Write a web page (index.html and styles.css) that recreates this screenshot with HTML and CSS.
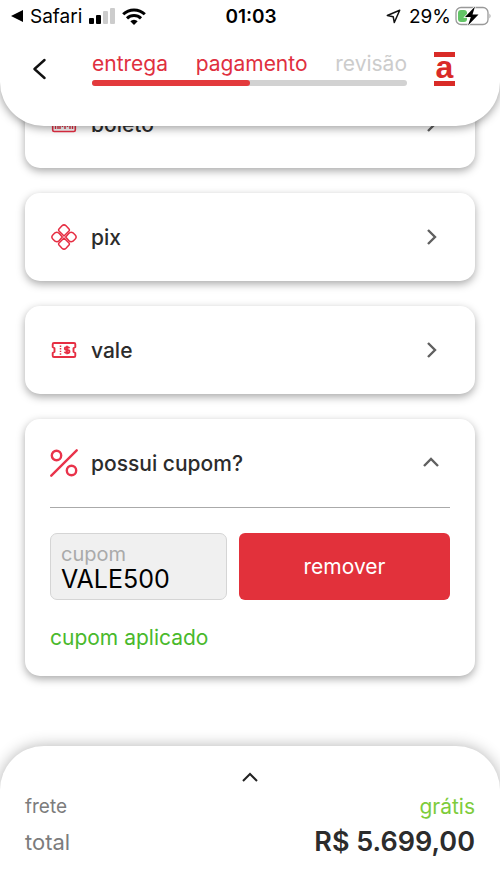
FILE: index.html
```html
<!DOCTYPE html>
<html lang="pt-BR">
<head>
<meta charset="utf-8">
<meta name="viewport" content="width=device-width, initial-scale=1">
<title>pagamento</title>
<link rel="stylesheet" href="styles.css">
</head>
<body>
<header class="top">
  <div class="status">
    <div class="status-left">
      <svg width="12" height="12" viewBox="0 0 12 12" aria-hidden="true"><path d="M0 6 12 0v12z"/></svg>
      <span class="status-app">Safari</span>
      <svg class="signal" width="26" height="17" viewBox="0 0 26 17" aria-hidden="true"><rect y="10" width="5" height="6" rx="1"/><rect x="7" y="7" width="5" height="9" rx="1"/><rect class="off" x="14" y="3" width="5" height="13" rx="1"/><rect class="off" x="21" y="0" width="5" height="16" rx="1"/></svg>
      <svg width="24" height="17" viewBox="0 0 24 17" aria-hidden="true"><g fill="none" stroke="#000" stroke-width="3"><path d="M1.2 6.3a15.4 15.4 0 0 1 21.6 0"/><path d="M5 10.4a10 10 0 0 1 14 0"/></g><path d="M12 17 8.3 13.2a5.3 5.3 0 0 1 7.4 0z"/></svg>
    </div>
    <span class="clock">01:03</span>
    <div class="status-right">
      <svg width="15" height="15" viewBox="0 0 15 15" aria-hidden="true"><path d="M13.700 1.300 1.300 6.500 7.200 7.700 8.300 13.500z" fill="none" stroke="#111" stroke-width="1.500" stroke-linejoin="round"/></svg>
      <span class="percent">29%</span>
      <svg width="36" height="20" viewBox="0 0 36 20" aria-hidden="true"><rect x="1" y="1.500" width="32" height="17" rx="5" fill="#fff" stroke="#999" stroke-width="1.300"/><path d="M34.500 7.500q2 2.500 0 5z" fill="#999"/><rect x="3" y="4" width="9" height="12" rx="3" fill="#62c466"/><path d="M20 .5 10 11h5.800L13 19.500 23.500 8.500h-6z" stroke="#fff" stroke-width="1.500" paint-order="stroke"/></svg>
    </div>
  </div>
  <nav class="nav" aria-label="etapas">
    <button class="back" type="button" aria-label="voltar"><svg width="14" height="22" viewBox="0 0 14 22"><path d="M11.500 2 1.500 11l10 9" fill="none" stroke="#111" stroke-width="2.400" stroke-linecap="round" stroke-linejoin="round"/></svg></button>
    <div class="steps">
      <div class="step-names">
        <a href="#entrega">entrega</a>
        <a href="#pagamento">pagamento</a>
        <span class="pending">revisão</span>
      </div>
      <div class="track"><div class="track-fill"></div></div>
    </div>
    <div class="logo">a</div>
  </nav>
</header>

<main class="options">
  <button class="card row" type="button">
    <svg class="icon" width="28" height="28" viewBox="0 0 28 28" aria-hidden="true"><g fill="none" stroke="#e62e43"><rect x="2.700" y="6" width="22.600" height="15.500" rx="1.500" stroke-width="1.600"/><path d="M5.500 9v10M8 9v10M10 9v10M12.500 9v8M15 9v10M17.500 9v8M20 9v10M22.500 9v10" stroke-width="1.400"/></g></svg>
    <span>boleto</span>
    <svg class="chevron" width="18" height="18" viewBox="0 0 18 18" aria-hidden="true"><path d="m6 2 7 7-7 7"/></svg>
  </button>
  <button class="card row" type="button">
    <svg class="icon" width="28" height="28" viewBox="0 0 28 28" aria-hidden="true"><g fill="none" stroke="#e62e43" stroke-width="1.500" stroke-linejoin="round"><path d="M14 13 9 8Q8.200 7 9 6L12 2.800Q14 .9 16 2.800L19 6Q19.800 7 19 8z"/><path d="M14 15 9 20Q8.200 21 9 22L12 25.200Q14 27.100 16 25.200L19 22Q19.800 21 19 20z"/><path d="M12.300 14 9.300 10.500Q7.300 8.300 5 9.800L2.800 12Q.9 14 2.800 16L5 18.200Q7.300 19.700 9.300 17.500z"/><path d="M15.700 14 18.700 10.500Q20.700 8.300 23 9.800L25.200 12Q27.100 14 25.200 16L23 18.200Q20.700 19.700 18.700 17.500z"/></g></svg>
    <span>pix</span>
    <svg class="chevron" width="18" height="18" viewBox="0 0 18 18" aria-hidden="true"><path d="m6 2 7 7-7 7"/></svg>
  </button>
  <button class="card row" type="button">
    <svg class="icon" width="28" height="28" viewBox="0 0 28 28" aria-hidden="true"><g fill="none" stroke="#e62e43"><path d="M4 7h20q1.300 0 1.300 1.300V11l-1.800 1.200v3.600l1.800 1.200v2.700Q25.300 21 24 21H4q-1.300 0-1.300-1.300V17l1.800-1.200v-3.600L2.700 11V8.300Q2.700 7 4 7z" stroke-width="1.900" stroke-linejoin="round"/><path d="M10.500 9.500v9.500" stroke-width="1.500" stroke-dasharray="1.400 1.200"/><path d="M19.500 12.200q-.7-1-2.500-1-2.200 0-2.200 1.400t2.300 1.400 2.400 1.500-2.400 1.500q-1.900 0-2.600-1.200M17 9.700v8.600" stroke-width="1.800"/></g></svg>
    <span>vale</span>
    <svg class="chevron" width="18" height="18" viewBox="0 0 18 18" aria-hidden="true"><path d="m6 2 7 7-7 7"/></svg>
  </button>
  <section class="card">
    <button class="row" type="button" aria-expanded="true">
      <svg class="icon" width="28" height="28" viewBox="0 0 28 28" aria-hidden="true"><g fill="none" stroke="#e9334b" stroke-width="2.400" stroke-linecap="round"><path d="M1.300 26.700 26.700 1.300"/><circle cx="6.500" cy="6.500" r="4.700"/><circle cx="21.500" cy="21.500" r="4.700"/></g></svg>
      <span>possui cupom?</span>
      <svg class="chevron" width="18" height="18" viewBox="0 0 18 18" aria-hidden="true"><path d="m2 12 7-7 7 7"/></svg>
    </button>
    <div class="coupon">
      <form class="coupon-form">
        <div class="field">
          <label for="cupom">cupom</label>
          <input id="cupom" type="text" value="VALE500" readonly>
        </div>
        <button class="remove" type="button">remover</button>
      </form>
      <p class="applied">cupom aplicado</p>
    </div>
  </section>
</main>

<footer class="summary">
  <button class="expand" type="button" aria-label="ver resumo"><svg width="18" height="12" viewBox="0 0 18 12"><path d="m2 10 7-7 7 7" fill="none" stroke="#222" stroke-width="2"/></svg></button>
  <dl class="totals">
    <div class="line"><dt>frete</dt><dd class="free">grátis</dd></div>
    <div class="line total"><dt>total</dt><dd>R$ 5.699,00</dd></div>
  </dl>
</footer>
</body>
</html>
```

FILE: styles.css
```css
* {
  box-sizing: border-box;
}

body {
  margin: 0;
  min-height: 100vh;
  display: flex;
  flex-direction: column;
  background: #fff;
  color: #2c2c2c;
  font-family: Inter, "Liberation Sans", sans-serif;
  font-size: 21px;
}

button {
  padding: 0;
  border: 0;
  background: none;
  color: inherit;
  font: inherit;
}

svg {
  display: block;
  flex: none;
}

.top {
  position: sticky;
  top: 0;
  z-index: 1;
  padding-bottom: 40px;
  border-radius: 0 0 44px 44px;
  background: #fff;
  box-shadow: 0 2px 10px rgba(0, 0, 0, 0.4);
}

.status {
  display: grid;
  grid-template-columns: 1fr auto 1fr;
  align-items: center;
  height: 32px;
  padding: 0 9px 0 11px;
  color: #000;
  font-size: 19px;
}

.status-left,
.status-right {
  display: flex;
  align-items: center;
}

.status-left {
  gap: 7px;
}

.status-right {
  justify-content: flex-end;
  gap: 4px;
}

.percent {
  margin-left: 4px;
}

.signal .off {
  fill: #ccc;
}

.clock {
  font-weight: 600;
}

.nav {
  display: flex;
  align-items: center;
  height: 54px;
  padding: 20px 45px 0 33px;
}

.back {
  width: 59px;
}

.steps {
  flex: 1;
}

.step-names {
  display: flex;
  justify-content: space-between;
  line-height: 24px;
}

.step-names a {
  color: #e0303f;
  text-decoration: none;
}

.step-names .pending {
  color: #ccc;
}

.track {
  height: 6px;
  margin-top: 4px;
  border-radius: 3px;
  background: #d2d2d2;
}

.track-fill {
  width: 50%;
  height: 6px;
  border-radius: 3px;
  background: #e33a3c;
}

.logo {
  width: 21px;
  height: 34px;
  margin-left: 27px;
  border-top: 5px solid #d92b27;
  border-bottom: 5px solid #d92b27;
  color: #d92b27;
  font-family: "Liberation Sans", sans-serif;
  font-size: 32px;
  font-weight: 700;
  line-height: 21px;
  text-align: center;
}

.options {
  flex: 1;
  display: flex;
  flex-direction: column;
  gap: 25px;
  margin-top: -46px;
  padding: 0 25px 69px;
}

.card {
  border-radius: 15px;
  background: #fff;
  box-shadow: 0 3px 8px rgba(0, 0, 0, 0.34);
}

.row {
  display: flex;
  align-items: center;
  gap: 13px;
  width: 100%;
  height: 88px;
  padding: 0 35px 0 25px;
  font-weight: 500;
}

.chevron {
  margin-left: auto;
  fill: none;
  stroke: #606060;
  stroke-width: 2.4;
}

.coupon {
  margin: 0 25px;
  padding: 25px 0;
  border-top: 1px solid #aaa;
}

.coupon-form {
  display: grid;
  grid-template-columns: 177fr 211fr;
  gap: 12px;
}

.field {
  display: flex;
  flex-direction: column;
  height: 67px;
  padding: 8px 10px;
  border: 1px solid #d5d5d5;
  border-radius: 7px;
  background: #f0f0f0;
}

.field label {
  color: #aaa;
  font-size: 20px;
  line-height: 24px;
}

.field input {
  width: 100%;
  padding: 0;
  border: 0;
  outline: 0;
  background: none;
  color: #000;
  font-family: inherit;
  font-size: 25px;
  line-height: 26px;
}

.remove {
  border-radius: 6px;
  background: #e2313b;
  color: #fff;
}

.applied {
  margin: 25px 0 0;
  color: #49b92c;
  line-height: 26px;
}

.summary {
  position: sticky;
  bottom: 0;
  padding: 25px 25px 29px;
  border-radius: 44px 44px 0 0;
  background: #fff;
  box-shadow: 0 0 15px rgba(0, 0, 0, 0.3);
}

.expand {
  display: block;
  margin: 0 auto 6px;
}

.totals {
  margin: 0;
}

.line {
  display: flex;
  align-items: center;
  justify-content: space-between;
  height: 35px;
}

.line dt {
  color: #7c7c7c;
  font-size: 19px;
}

.line dd {
  margin: 0;
}

.line .free {
  color: #7dcc3b;
}

.total dt {
  font-size: 22px;
}

.total dd {
  font-size: 27px;
  font-weight: 600;
}
```
